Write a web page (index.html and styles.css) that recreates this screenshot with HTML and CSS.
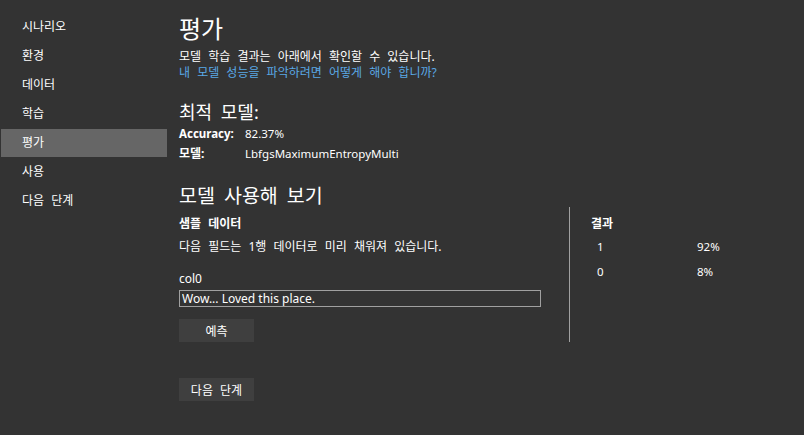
FILE: index.html
```html
<!DOCTYPE html>
<html lang="ko">
<head>
    <meta charset="UTF-8">
    <title>평가</title>
    <link rel="stylesheet" href="styles.css">
</head>
<body>
    <div class="app">
        <!-- 왼쪽 메뉴 -->
        <ul class="nav">
            <li>시나리오</li>
            <li>환경</li>
            <li>데이터</li>
            <li>학습</li>
            <li class="active">평가</li>
            <li>사용</li>
            <li>다음 단계</li>
        </ul>

        <div class="main">
            <h1>평가</h1>
            <p class="intro">모델 학습 결과는 아래에서 확인할 수 있습니다.</p>
            <a class="help" href="#">내 모델 성능을 파악하려면 어떻게 해야 합니까?</a>

            <h2 class="best-title">최적 모델:</h2>
            <div class="stats">
                <span class="label en">Accuracy:</span><span class="en">82.37%</span>
                <span class="label">모델:</span><span class="en">LbfgsMaximumEntropyMulti</span>
            </div>

            <h2 class="try-title">모델 사용해 보기</h2>
            <div class="try">
                <div class="sample">
                    <div class="section-title">샘플 데이터</div>
                    <p class="note">다음 필드는 1행 데이터로 미리 채워져 있습니다.</p>
                    <label class="field-label">col0</label>
                    <input class="field" type="text" value="Wow... Loved this place.">
                    <button class="btn">예측</button>
                </div>
                <div class="divider"></div>
                <div class="results">
                    <div class="section-title">결과</div>
                    <div class="result-row en"><span class="cls">1</span><span>92%</span></div>
                    <div class="result-row en"><span class="cls">0</span><span>8%</span></div>
                </div>
            </div>

            <button class="btn next">다음 단계</button>
        </div>
    </div>
</body>
</html>
```

FILE: styles.css
```css
body {
    margin: 0;
    background: #333333;
    color: #ffffff;
    font-family: "Noto Sans", "Noto Sans CJK KR", sans-serif;
    font-size: 12px;
    word-spacing: 4px;
}

/* latin text is a little narrower in the original */
.en {
    font-size: 11.5px;
    word-spacing: 0;
}

.app {
    display: flex;
    gap: 12px;
    height: 435px;
}

.nav {
    list-style: none;
    margin: 0;
    padding: 13px 0 0 1px;
    width: 166px;
}

.nav li {
    height: 28px;
    line-height: 27px;
    margin-bottom: 1px;
    padding-left: 21px;
}

.nav li.active {
    background: #666666;
}

.main {
    width: 560px;
    display: flex;
    flex-direction: column;
    align-items: flex-start;
}

h1 {
    font-weight: normal;
    font-size: 24px;
    line-height: 30px;
    margin: 14px 0 5px;
}

.intro {
    margin: 0;
    line-height: 16px;
}

.help {
    color: #5aa9e6;
    text-decoration: none;
    line-height: 16px;
}

h2 {
    font-weight: normal;
    margin: 0;
}

.best-title {
    font-size: 18px;
    line-height: 24px;
    margin-top: 19px;
}

.stats {
    display: grid;
    grid-template-columns: 66px auto;
    row-gap: 4px;
    line-height: 16px;
    margin-top: 2px;
}

.label {
    font-weight: bold;
}

.try-title {
    font-size: 19.5px;
    line-height: 24px;
    margin-top: 22px;
}

.try {
    display: flex;
    margin-top: -1px;
}

.sample {
    width: 390px;
    display: flex;
    flex-direction: column;
    align-items: flex-start;
    padding-top: 9px;
}

.section-title {
    font-weight: bold;
    line-height: 16px;
}

.note {
    margin: 7px 0 0;
    line-height: 16px;
}

.field-label {
    margin-top: 16px;
    line-height: 16px;
}

.field {
    box-sizing: border-box;
    width: 362px;
    height: 17px;
    margin: 3px 0 0;
    padding: 0 2px;
    background: #333333;
    border: 1px solid #a0a0a0;
    color: #ffffff;
    font: inherit;
    word-spacing: 0;
}

.btn {
    background: #3f3f3f;
    border: none;
    color: #ffffff;
    font: inherit;
    word-spacing: 4px;
    width: 75px;
    height: 23px;
    padding: 0;
    margin-top: 12px;
}

.divider {
    width: 1px;
    height: 135px;
    background: #a0a0a0;
}

.results {
    width: 180px;
    padding: 9px 0 0 21px;
}

.result-row {
    display: flex;
    line-height: 16px;
    margin-top: 7px;
}

.result-row + .result-row {
    margin-top: 9px;
}

.cls {
    width: 106px;
    padding-left: 6px;
    box-sizing: border-box;
}

.next {
    margin-top: 36px;
}
```
